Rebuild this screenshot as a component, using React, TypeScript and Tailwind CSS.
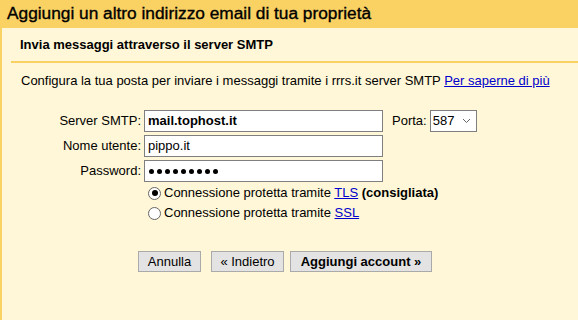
import React from "react";

function Radio({ checked }: { checked?: boolean }) {
  return (
    <span className="flex h-[13px] w-[13px] shrink-0 items-center justify-center rounded-full border border-[#666] bg-white">
      {checked && <span className="h-[6px] w-[6px] rounded-full bg-black" />}
    </span>
  );
}

function Field({ label, children }: { label: string; children: React.ReactNode }) {
  return (
    <div className="flex items-center">
      <span className="w-[144px] pr-[3px] text-right">{label}</span>
      {children}
    </div>
  );
}

export default function App() {
  return (
    <div
      className="flex h-[320px] w-[578px] flex-col overflow-hidden bg-[#fff7d7] text-[13px] text-black"
      style={{ fontFamily: '"Liberation Sans", Arial, sans-serif' }}
    >
      <div className="flex h-[28px] shrink-0 items-center bg-[#fad163] pl-[7px] text-[17.3px] leading-none [-webkit-text-stroke:0.35px_#000]">
        Aggiungi un altro indirizzo email di tua proprietà
      </div>

      <div className="flex flex-1 flex-col border-l-2 border-[#fad163] pl-[9px]">
        <div className="border-b-2 border-[#fad163] pb-[9px] pl-[9px] pt-[9px] text-[13px] font-bold leading-[15px]">
          Invia messaggi attraverso il server SMTP
        </div>

        <p className="mt-[10px] pl-[10px] leading-[15px]">
          Configura la tua posta per inviare i messaggi tramite i rrrs.it server SMTP{" "}
          <a className="text-[#0000cc] underline">Per saperne di più</a>
        </p>

        <div className="-ml-[11px] mt-[22px] flex flex-col gap-[3px]">
          <Field label="Server SMTP:">
            <div className="flex h-[22px] w-[239px] items-center border border-[#7f7f7f] bg-white pl-[3px] font-bold">
              mail.tophost.it
            </div>
            <span className="ml-[9px]">Porta:</span>
            <div className="ml-[3px] flex h-[22px] w-[47px] items-center justify-between border border-[#7f7f7f] bg-white pl-[2px] pr-[5px]">
              <span>587</span>
              <svg width="9" height="6" viewBox="0 0 9 6" fill="none">
                <path d="M1 1l3.5 3.5L8 1" stroke="#666" strokeWidth="1" />
              </svg>
            </div>
          </Field>
          <Field label="Nome utente:">
            <div className="flex h-[22px] w-[239px] items-center border border-[#7f7f7f] bg-white pl-[3px]">
              pippo.it
            </div>
          </Field>
          <Field label="Password:">
            <div className="flex h-[22px] w-[239px] items-center gap-[3px] border border-[#7f7f7f] bg-white pl-[4px]">
              {Array.from({ length: 9 }).map((_, i) => (
                <span key={i} className="h-[5px] w-[5px] rounded-full bg-black" />
              ))}
            </div>
          </Field>

          <div className="ml-[148px] mt-0 flex flex-col gap-[4px]">
            <label className="flex items-center gap-[3px] leading-[16px]">
              <Radio checked />
              <span>
                Connessione protetta tramite <a className="text-[#0000cc] underline">TLS</a>{" "}
                <b>(consigliata)</b>
              </span>
            </label>
            <label className="flex items-center gap-[3px] leading-[16px]">
              <Radio />
              <span>
                Connessione protetta tramite <a className="text-[#0000cc] underline">SSL</a>
              </span>
            </label>
          </div>

          <div className="ml-[138px] mt-[27px] flex items-center">
            <button className="h-[21px] w-[63px] border border-[#aaa] bg-[#e3e3e3] leading-none">
              Annulla
            </button>
            <button className="ml-[10px] h-[21px] w-[73px] border border-[#aaa] bg-[#e3e3e3] leading-none">
              « Indietro
            </button>
            <button className="ml-[6px] h-[21px] w-[142px] border border-[#aaa] bg-[#e3e3e3] font-bold leading-none">
              Aggiungi account »
            </button>
          </div>
        </div>
      </div>
    </div>
  );
}
